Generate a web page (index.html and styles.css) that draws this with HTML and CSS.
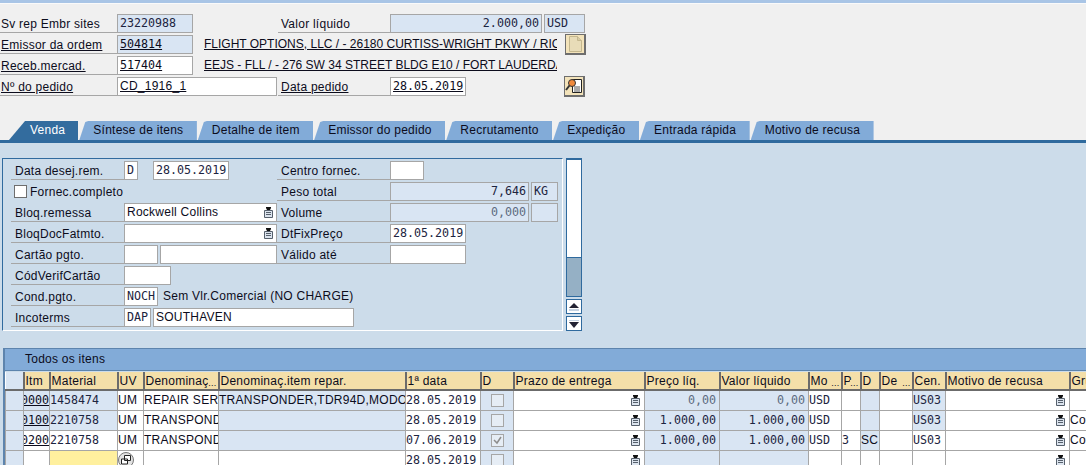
FILE: index.html
```html
<!DOCTYPE html>
<html lang="en">
<head>
  <meta charset="UTF-8">
  <title>Ordem de venda</title>
  <link rel="stylesheet" href="styles.css">
</head>
<body>
  <!-- shared icons -->
  <svg class="defs" width="0" height="0">
    <symbol id="f4" viewBox="0 0 9 11">
      <path d="M2 0h5v1L6 3H3L2 1z" fill="#111"/>
      <path d="M.5 3.500h8v7h-8z" fill="#dce4ee" stroke="#56606c"/>
      <path d="M2 5.500h5M2 7.500h5" stroke="#56606c"/>
    </symbol>
  </svg>

  <div class="topbar"></div>

  <header class="head">
    <div class="head-row">
      <span class="lbl">Sv rep Embr sites</span>
      <div class="mid"><span class="fld ro mono w76">23220988</span></div>
      <span class="lbl second">Valor líquido</span>
      <div class="end">
        <span class="fld ro mono num w152">2.000,00</span>
        <span class="fld ro mono w41">USD</span>
      </div>
    </div>
    <div class="head-row">
      <a class="lbl link">Emissor da ordem</a>
      <div class="mid wide">
        <span class="fld ro mono w76 link">504814</span>
        <a class="desc link">FLIGHT OPTIONS, LLC / - 26180 CURTISS-WRIGHT PKWY / RICHMOND HEIGHTS</a>
        <button class="btn">
          <svg width="14" height="16" viewBox="0 0 14 16"><path d="M1.500 .5h8l4 4v11h-12z" fill="#e8dcb8" stroke="#c4b78e"/><path d="M9.500 .5v4h4" fill="#d8cca6" stroke="#c4b78e"/></svg>
        </button>
      </div>
    </div>
    <div class="head-row">
      <a class="lbl link">Receb.mercad.</a>
      <div class="mid wide">
        <span class="fld mono w76 link">517404</span>
        <a class="desc link">EEJS - FLL / - 276 SW 34 STREET BLDG E10 / FORT LAUDERDALE</a>
      </div>
    </div>
    <div class="head-row">
      <a class="lbl link">Nº do pedido</a>
      <div class="mid"><span class="fld link grow">CD_1916_1</span></div>
      <a class="lbl second link">Data pedido</a>
      <div class="end spread">
        <span class="fld mono w76 link">28.05.2019</span>
        <button class="btn">
          <svg width="18" height="18" viewBox="0 0 18 18">
            <path d="M7.500 2.500h9v13h-9z" fill="#fff" stroke="#222"/>
            <path d="M9 10h6M9 12h6M9 14h6" stroke="#555"/>
            <circle cx="7" cy="6" r="3.500" fill="#f08a3c" stroke="#333"/>
            <path d="M4.500 8.500L1 13" stroke="#333" stroke-width="2"/>
          </svg>
        </button>
      </div>
    </div>
  </header>

  <nav class="tabs">
    <a class="tab active">Venda</a>
    <a class="tab">Síntese de itens</a>
    <a class="tab">Detalhe de item</a>
    <a class="tab">Emissor do pedido</a>
    <a class="tab">Recrutamento</a>
    <a class="tab">Expedição</a>
    <a class="tab">Entrada rápida</a>
    <a class="tab">Motivo de recusa</a>
  </nav>

  <main class="panel">
    <div class="sub-wrap">
      <section class="sub">
        <div class="sub-row">
          <span class="lbl">Data desej.rem.</span>
          <div class="mid"><span class="fld mono w14">D</span><span class="fld mono w76 push">28.05.2019</span></div>
          <span class="lbl">Centro fornec.</span>
          <div class="end"><span class="fld w34"></span></div>
        </div>
        <div class="sub-row">
          <label class="check-lbl"><span class="cb"></span>Fornec.completo</label>
          <span class="lbl">Peso total</span>
          <div class="end"><span class="fld ro mono num w139">7,646</span><span class="fld ro mono w27">KG</span></div>
        </div>
        <div class="sub-row">
          <span class="lbl">Bloq.remessa</span>
          <div class="mid"><span class="fld grow help">Rockwell Collins<svg class="f4"><use href="#f4"/></svg></span></div>
          <span class="lbl">Volume</span>
          <div class="end"><span class="fld ro mono num w139 soft">0,000</span><span class="fld ro w27"></span></div>
        </div>
        <div class="sub-row">
          <span class="lbl">BloqDocFatmto.</span>
          <div class="mid"><span class="fld grow help"><svg class="f4"><use href="#f4"/></svg></span></div>
          <span class="lbl">DtFixPreço</span>
          <div class="end"><span class="fld mono w76">28.05.2019</span></div>
        </div>
        <div class="sub-row">
          <span class="lbl">Cartão pgto.</span>
          <div class="mid"><span class="fld w33"></span><span class="fld grow"></span></div>
          <span class="lbl">Válido até</span>
          <div class="end"><span class="fld w76"></span></div>
        </div>
        <div class="sub-row">
          <span class="lbl">CódVerifCartão</span>
          <div class="mid"><span class="fld w47"></span></div>
        </div>
        <div class="sub-row">
          <span class="lbl">Cond.pgto.</span>
          <div class="mid over"><span class="fld mono w33">NOCH</span><span class="plain">Sem Vlr.Comercial (NO CHARGE)</span></div>
        </div>
        <div class="sub-row">
          <span class="lbl">Incoterms</span>
          <div class="mid over"><span class="fld mono w26">DAP</span><span class="fld w201">SOUTHAVEN</span></div>
        </div>
      </section>

      <div class="scroll">
        <div class="track"><div class="thumb"></div></div>
        <div class="arrow"><svg width="10" height="8" viewBox="0 0 10 8"><path d="M5 0l5 5H0z" fill="#223"/><path d="M0 6h10v2H0z" fill="#c6d3e2"/></svg></div>
        <div class="arrow"><svg width="10" height="8" viewBox="0 0 10 8"><path d="M0 0h10v1H0z" fill="#c6d3e2"/><path d="M0 2h10L5 8z" fill="#223"/></svg></div>
      </div>
    </div>

    <section class="grid-box">
      <div class="grid-title">Todos os itens</div>
      <table class="grid">
        <colgroup>
          <col class="c18"><col class="c26"><col class="c68"><col class="c26"><col class="c75"><col class="c187"><col class="c75"><col class="c33"><col class="c131"><col class="c75"><col class="c89"><col class="c33"><col class="c19"><col class="c19"><col class="c33"><col class="c33"><col class="c124"><col class="c60">
        </colgroup>
        <thead>
          <tr>
            <th class="sel"></th><th>Itm</th><th>Material</th><th>UV</th><th>Denominaç<i>...</i></th><th>Denominaç.item repar.</th><th>1ª data</th><th>D</th><th>Prazo de entrega</th><th>Preço líq.</th><th>Valor líquido</th><th>Mo<i>...</i></th><th>P<i>...</i></th><th>D</th><th>De<i>...</i></th><th>Cen.</th><th>Motivo de recusa</th><th>Grupo</th>
          </tr>
        </thead>
        <tbody>
          <tr>
            <td class="sel"></td>
            <td class="ro"><div class="itm mono link">0000</div></td>
            <td class="ro mono">1458474</td>
            <td>UM</td>
            <td>REPAIR SERVICE</td>
            <td class="ro">TRANSPONDER,TDR94D,MODO S</td>
            <td class="mono">28.05.2019</td>
            <td class="ro"><span class="cb off"></span></td>
            <td class="help-cell"><svg class="f4"><use href="#f4"/></svg></td>
            <td class="ro mono num soft">0,00</td>
            <td class="ro mono num soft">0,00</td>
            <td class="mono">USD</td><td></td><td class="ro"></td><td></td>
            <td class="ro mono">US03</td>
            <td class="help-cell"><svg class="f4"><use href="#f4"/></svg></td>
            <td></td>
          </tr>
          <tr>
            <td class="sel"></td>
            <td class="ro"><div class="itm mono link">0100</div></td>
            <td class="ro mono">2210758</td>
            <td>UM</td>
            <td>TRANSPONDER</td>
            <td class="ro"></td>
            <td class="mono">28.05.2019</td>
            <td class="ro"><span class="cb off"></span></td>
            <td class="help-cell"><svg class="f4"><use href="#f4"/></svg></td>
            <td class="ro mono num">1.000,00</td>
            <td class="ro mono num">1.000,00</td>
            <td class="mono">USD</td><td></td><td class="ro"></td><td></td>
            <td class="ro mono">US03</td>
            <td class="help-cell"><svg class="f4"><use href="#f4"/></svg></td>
            <td>Cond</td>
          </tr>
          <tr>
            <td class="sel"></td>
            <td><div class="itm mono link">0200</div></td>
            <td class="mono">2210758</td>
            <td>UM</td>
            <td>TRANSPONDER</td>
            <td class="ro"></td>
            <td class="mono">07.06.2019</td>
            <td class="ro"><span class="cb off"><svg width="11" height="11" viewBox="0 0 11 11"><path d="M2 5l3 3 4-6" fill="none" stroke="#8c8c8c" stroke-width="1.500"/></svg></span></td>
            <td class="help-cell"><svg class="f4"><use href="#f4"/></svg></td>
            <td class="ro mono num">1.000,00</td>
            <td class="ro mono num">1.000,00</td>
            <td class="mono">USD</td><td class="mono">3</td><td class="ro">SC</td><td></td>
            <td class="mono">US03</td>
            <td class="help-cell"><svg class="f4"><use href="#f4"/></svg></td>
            <td>Cond</td>
          </tr>
          <tr>
            <td class="sel"></td>
            <td></td>
            <td class="req"></td>
            <td class="pick-cell"><span class="pick"><svg width="12" height="12" viewBox="0 0 12 12"><path d="M4.500 1.500h6v5h-6zM1.500 5h6v5h-6z" fill="#fff" stroke="#222"/></svg></span></td>
            <td></td>
            <td></td>
            <td class="mono">28.05.2019</td>
            <td class="ro"><span class="cb off"></span></td>
            <td class="help-cell"><svg class="f4"><use href="#f4"/></svg></td>
            <td class="ro"></td>
            <td class="ro"></td>
            <td></td><td></td><td></td><td></td><td></td>
            <td class="help-cell"><svg class="f4"><use href="#f4"/></svg></td>
            <td></td>
          </tr>
        </tbody>
      </table>
    </section>
  </main>
</body>
</html>
```

FILE: styles.css
```css
html, body {
  margin: 0;
  padding: 0;
  height: 465px;
  overflow: hidden;
}
body {
  width: 1086px;
  background: #f0f0f0;
  color: #0c0c1c;
  font-family: "Liberation Sans", Arial, sans-serif;
  font-size: 12px;
  letter-spacing: .25px;
}
.defs {
  display: none;
}
.topbar {
  height: 3px;
  background: #a9c5e6;
  border-bottom: 1px solid #fafafa;
}
.mono {
  font-family: "DejaVu Sans Mono", monospace;
  font-size: 11.67px;
  letter-spacing: 0;
  color: #1c2440;
}
.link {
  text-decoration: underline;
  color: #0c0c1c;
}

/* header block */
.head {
  height: 117px;
  box-sizing: border-box;
  padding-top: 10px;
  display: flex;
  flex-direction: column;
  gap: 2px;
}
.head-row {
  display: grid;
  grid-template-columns: 117px 160px 113px 1fr;
  height: 19px;
}
.sub-row {
  display: grid;
  grid-template-columns: 113px 153px 113px 1fr;
  height: 19px;
}
.lbl {
  display: block;
  box-sizing: border-box;
  height: 19px;
  padding-left: 1px;
  line-height: 20px;
  border-bottom: 1px solid #a6a6a6;
  white-space: nowrap;
  overflow: hidden;
}
.second {
  grid-column: 3;
  padding-left: 3px;
  margin-left: 1px;
}
.sub-row .lbl {
  padding-left: 4px;
  line-height: 21px;
}
.mid {
  display: flex;
  gap: 2px;
}
.mid.wide {
  grid-column: 2 / 5;
}
.mid.over {
  grid-column: 2 / 5;
}
.end {
  display: flex;
  gap: 2px;
  grid-column: 4;
}
.spread {
  width: 195px;
  justify-content: space-between;
}
.fld {
  display: block;
  box-sizing: border-box;
  height: 19px;
  padding: 0 2px 0 2px;
  line-height: 16px;
  background: #fff;
  border: 1px solid #a6a6a6;
  white-space: nowrap;
  overflow: hidden;
}
.fld.ro {
  background: #d9e5f3;
}
.num {
  text-align: right;
}
.soft {
  color: #5c6b80;
}
.grow { flex: 1; }
.push { margin-left: 13px; }
.w14 { width: 14px; }
.w26 { width: 27px; }
.w27 { width: 27px; }
.w33 { width: 34px; }
.w34 { width: 34px; }
.w41 { width: 41px; }
.w47 { width: 47px; }
.w76 { width: 76px; }
.w139 { width: 139px; }
.w152 { width: 152px; }
.w201 { width: 201px; }
.desc {
  width: 353px;
  margin-left: 9px;
  line-height: 19px;
  letter-spacing: 0;
  white-space: nowrap;
  overflow: hidden;
}
.btn {
  width: 21px;
  height: 21px;
  margin: -1px 0 0 6px;
  padding: 0;
  display: flex;
  align-items: center;
  justify-content: center;
  background: #f3e3ba;
  border: 1px solid #6e6e6e;
  border-width: 1px 2px 2px 1px;
}

/* tab strip */
.tabs {
  display: flex;
  gap: 1px;
  height: 19px;
  padding-left: 9px;
}
.tab {
  padding: 0 13.5px 0 14px;
  line-height: 19px;
  background: #82abd8;
  clip-path: polygon(0 100%, 6px 1px, 9px 0, 100% 0, 100% 100%);
}
.tab.active {
  padding: 0 13px 0 21px;
  color: #fff;
  background: #336c9e;
  clip-path: polygon(0 100%, 16px 0, 100% 0, 100% 100%);
}

/* main panel */
.panel {
  height: 325px;
  box-sizing: border-box;
  padding-top: 15px;
  background: #ccdcea;
  border-top: 3px solid #2f6a9e;
}
.sub-wrap {
  display: flex;
  gap: 3px;
  margin-left: 2px;
  width: 580px;
  height: 173px;
}
.sub {
  width: 561px;
  box-sizing: border-box;
  padding: 2px 0 0 8px;
  display: flex;
  flex-direction: column;
  gap: 2px;
  border: 1px solid #2f6a9e;
  border-right-color: #fff;
  border-bottom-color: #fff;
}
.check-lbl {
  grid-column: 1 / 3;
  display: flex;
  align-items: center;
  gap: 3px;
  padding-left: 3px;
}
.cb {
  display: inline-flex;
  align-items: center;
  justify-content: center;
  width: 13px;
  height: 13px;
  box-sizing: border-box;
  background: #fff;
  border: 1px solid #6e6e6e;
}
.cb.off {
  background: #e6edf5;
  border-color: #a6a6a6;
}
.help {
  position: relative;
  line-height: 17px;
}
.f4 {
  position: absolute;
  right: 3px;
  top: 3px;
  width: 9px;
  height: 11px;
}
.plain {
  margin-left: 3px;
  line-height: 19px;
}

/* little scrollbar beside the subscreen */
.scroll {
  width: 16px;
  display: flex;
  flex-direction: column;
  gap: 2px;
}
.track {
  height: 139px;
  box-sizing: border-box;
  background: #fff;
  border: 1px solid #2f6a9e;
  border-top-width: 2px;
  display: flex;
  flex-direction: column;
  justify-content: flex-end;
}
.thumb {
  height: 38px;
  background: #95b0c5;
  border-top: 1px solid #2f6a9e;
}
.arrow {
  height: 15px;
  box-sizing: border-box;
  background: #fff;
  border: 1px solid #2f6a9e;
  display: flex;
  align-items: center;
  justify-content: center;
}

/* items grid */
.grid-box {
  margin: 17px 0 0 3px;
  border-top: 1px solid #5d84ad;
  border-left: 2px solid #5d84ad;
  width: 1090px;
}
.grid-title {
  height: 21px;
  line-height: 21px;
  padding-left: 20px;
  background: #82abd8;
  border-bottom: 1px solid #5d84ad;
}
.grid {
  table-layout: fixed;
  width: 1079px;
  margin-top: 1px;
  border-collapse: collapse;
  background: #fff;
}
.c18 { width: 18px; }
.c19 { width: 19px; }
.c26 { width: 26px; }
.c33 { width: 33px; }
.c60 { width: 60px; }
.c68 { width: 68px; }
.c75 { width: 75px; }
.c89 { width: 89px; }
.c124 { width: 124px; }
.c131 { width: 131px; }
.c187 { width: 187px; }
.grid th {
  position: relative;
  height: 17px;
  padding: 0 0 0 1px;
  font-weight: normal;
  text-align: left;
  white-space: nowrap;
  overflow: hidden;
  background: #f4dfa9;
  border-right: 2px solid #6b6b6b;
  border-bottom: 2px solid #6b6b6b;
}
.grid th i {
  position: absolute;
  right: 1px;
  bottom: 3px;
  font-style: normal;
  font-size: 9px;
  line-height: 6px;
  background: #f4dfa9;
}
.grid th.sel {
  background: #d9e5f3;
}
.grid td {
  box-sizing: border-box;
  height: 20px;
  padding: 0;
  position: relative;
  white-space: nowrap;
  overflow: hidden;
  border: 1px solid #a6a6a6;
  border-top: 0;
  background: #fff;
}
.grid td.ro, .grid td.sel {
  background: #d9e5f3;
}
.grid td.num {
  text-align: right;
  padding-right: 3px;
}
.grid td.req {
  background: #fff09e;
}
.grid td .cb {
  display: flex;
  margin: 0 auto;
}
.grid .f4 {
  right: 4px;
  top: 4px;
}
.itm {
  display: flex;
  justify-content: flex-end;
}
.pick {
  display: flex;
  align-items: center;
  justify-content: center;
  width: 16px;
  height: 16px;
  box-sizing: border-box;
  border: 1px solid #777;
  border-radius: 50%;
  background: #e2e2e2;
}
```
